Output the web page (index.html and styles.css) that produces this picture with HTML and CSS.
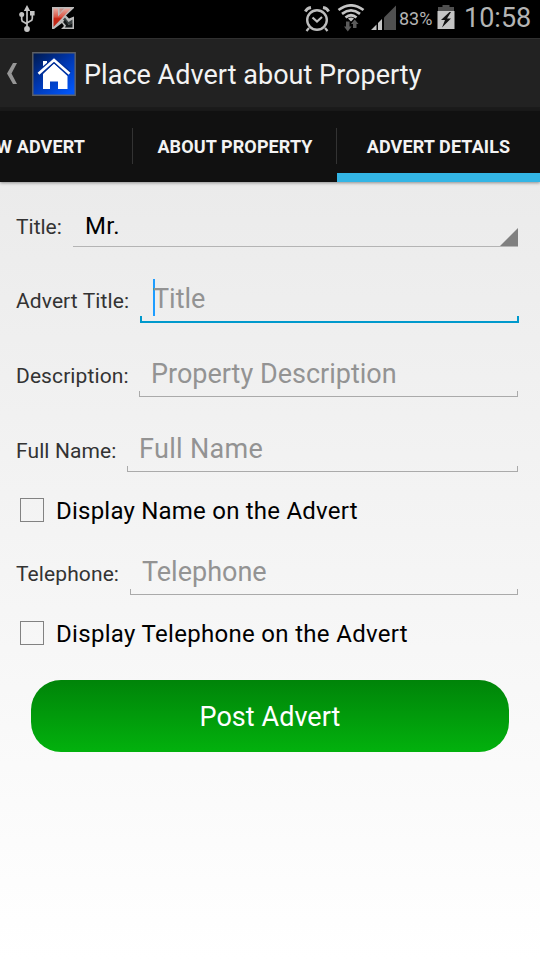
FILE: index.html
```
<!DOCTYPE html>
<html lang="en">
<head>
<meta charset="utf-8">
<title>Place Advert about Property</title>
<link rel="stylesheet" href="styles.css">
</head>
<body>
<header class="status">
  <svg class="usb" width="18" height="28" viewBox="0 0 18 28"><g fill="none" stroke="#c4c4c4" stroke-width="1.7"><path d="M9 4V25M3.7 10v4.5q0 2 2 2.5l3.3 2M14.3 9v4.500q0 2-2 2.500l-3.300 2"/></g><g fill="#c4c4c4"><path d="M9 0l3.200 6H5.800zM12 6h4.600v4.600H12z"/><circle cx="3.700" cy="9.500" r="2.500"/><circle cx="9" cy="24" r="2.900"/></g></svg>
  <svg class="kav" width="24" height="24" viewBox="0 0 24 24"><defs><linearGradient id="red" x2="0" y2="1"><stop offset="0" stop-color="#e8aaa0"/><stop offset=".45" stop-color="#d95545"/><stop offset=".55" stop-color="#c72412"/><stop offset="1" stop-color="#bd2b1c"/></linearGradient></defs><path d="M1 1h22v1L15 9.500l3 3 5-2V23H10l3-3-2-3-8 6H1z" fill="#bcbcbc"/><path d="M2.500 2.500H7v8l7-8h6L2.500 21z" fill="url(#red)"/><path d="M8.500 2.500H13L8.500 8z" fill="#c98d84"/><path d="M12 13.500l2-2 3.500 4.500 4-2.500V17l-3 2-5-4z" fill="#3a4243"/><path d="M12 16l2-2 4 5 3.500-2v4.500H14l1-2z" fill="#15191a"/></svg>
  <span class="gap"></span>
  <svg class="alarm" width="26" height="28" viewBox="0 0 26 28"><g fill="none" stroke="#bdbdbd"><circle cx="13" cy="15" r="9.800" stroke-width="2.400"/><path d="M8.500 12.500l4.500 4 5-4.500M5 23l-2.500 3M21 23l2.500 3" stroke-width="2.200"/><path d="M1.300 6.500Q3 3.200 7 2.500M24.700 6.500Q23 3.200 19 2.500" stroke-width="2.800"/></g></svg>
  <svg class="wifi" width="28" height="28" viewBox="0 0 28 28"><g fill="none" stroke="#c4c4c4" stroke-width="2.700"><path d="M1.500 6Q14-3.300 26.500 6M5 9.800Q14 3 23 9.800M8.500 13.500Q14 9 19.500 13.500"/></g><path d="M11 14.500q3-2 6 0l-3 3z" fill="#c4c4c4"/><path d="M9 17.500h3.500v5h2l-3.700 5-3.800-5h2zM16 24v-4h-2l3.700-4.500 3.800 4.500h-2v4z" fill="#5b5b5b"/></svg>
  <svg class="signal" width="26" height="26" viewBox="0 0 26 26"><path d="M13 12.500L25 .5V25H13z" fill="#505050"/><path d="M0 25l5.500-5.500V25zM7 18l4-4v11H7z" fill="#c4c4c4"/></svg>
  <span class="pct">83%</span>
  <svg class="batt" width="18" height="26" viewBox="0 0 18 26"><path d="M5.500 0h7v2H17v4H1V2h4.500z" fill="#505050"/><path d="M.5 6h17v18H.5z" fill="#c4c4c4"/><path d="M12.500 7L4 15h4l-3 7.500 9-9h-4l4-6.500z" fill="#111"/></svg>
  <span class="clock">10:58</span>
</header>
<div class="actionbar">
  <svg class="back" width="12" height="24" viewBox="0 0 12 24"><path d="M7 1h4L5.500 11.500 11 22H7L1 11.500z" fill="#969696"/></svg>
  <svg class="logo" width="44" height="44" viewBox="0 0 44 44"><defs><linearGradient id="blue" x2=".8" y2="1"><stop offset="0" stop-color="#00194b"/><stop offset=".5" stop-color="#0036ad"/><stop offset="1" stop-color="#0055f8"/></linearGradient></defs><path d="M.8.8h42.400v42.400H.8z" fill="url(#blue)" stroke="#5d6066" stroke-width="1.400"/><path d="M11 9h4v4l-4 3.500zM22 11.500L35.500 24v13H26v-7.500h-8V37H11V22z" fill="#fff"/><path d="M6.500 21.500L22 8l15.500 13.500" fill="none" stroke="#002f99" stroke-width="5"/><path d="M6.500 21.700L22 8l15.500 13.700" fill="none" stroke="#fff" stroke-width="2.600"/></svg>
  <h1 class="heading">Place Advert about Property</h1>
</div>
<nav class="tabs">
  <div class="tab first"><span>W ADVERT</span></div>
  <div class="tab second"><span>ABOUT PROPERTY</span></div>
  <div class="tab active"><span>ADVERT DETAILS</span></div>
</nav>
<main class="form">
  <div class="row select-row"><span class="label l-salutation">Title:</span><div class="select"><span class="value">Mr.</span><svg class="corner" width="18" height="18" viewBox="0 0 18 18"><path d="M18 0v18H0z" fill="#808080"/></svg></div></div>
  <div class="row"><span class="label l-title">Advert Title:</span><div class="field focus"><span class="caret"></span><span class="hint h-title">Title</span></div></div>
  <div class="row"><span class="label l-desc">Description:</span><div class="field"><span class="hint h-desc">Property Description</span></div></div>
  <div class="row"><span class="label l-name">Full Name:</span><div class="field"><span class="hint h-name">Full Name</span></div></div>
  <div class="check"><span class="box"></span><span class="c-name">Display Name on the Advert</span></div>
  <div class="row phone"><span class="label l-phone">Telephone:</span><div class="field"><span class="hint h-phone">Telephone</span></div></div>
  <div class="check"><span class="box"></span><span class="c-phone">Display Telephone on the Advert</span></div>
  <div class="post"><span>Post Advert</span></div>
</main>
</body>
</html>
```
FILE: styles.css
```
* { box-sizing: border-box; }
body { margin: 0; width: 540px; height: 960px; overflow: hidden; font-family: Roboto, "Noto Sans", sans-serif; background: #fff; display: flex; flex-direction: column; }
svg { display: block; flex: none; }
span { white-space: nowrap; }
.status { height: 38px; background: #000; display: flex; align-items: flex-start; padding: 5px 9px 0 18px; color: #b4b4b4; }
.kav { margin: 1px 0 0 15px; }
.gap { flex: 1; }
.alarm { margin-right: 7px; }
.wifi { margin: -1px 6px 0 0; }
.signal { margin-right: 2px; }
.pct { width: 33px; font-size: 18px; line-height: 28px; margin-right: 5px; }
.batt { margin-right: 9px; }
.clock { width: 67px; font-size: 27px; line-height: 26px; }
.actionbar { height: 73px; background: #222; border-top: 1px solid #303030; border-bottom: 4px solid #1b1b1b; display: flex; align-items: center; padding: 0 0 0 6px; }
.back { margin-top: 2px; }
.logo { margin: 2px 8px 0 14px; }
.heading { margin: 4px 0 0; color: #f3f3f3; font-size: 27px; font-weight: 400; line-height: 36px; letter-spacing: .03px; white-space: nowrap; }
.tabs { height: 71px; background: #111; display: flex; flex: none; color: #f3f3f3; font-size: 18px; font-weight: 700; line-height: 72px; letter-spacing: .1px; position: relative; z-index: 1; box-shadow: 0 1px 3px rgba(0,0,0,.4); }
.tab { height: 71px; display: flex; justify-content: center; }
.first { width: 133px; justify-content: flex-end; padding-right: 48px; }
.second { width: 204px; }
.active { width: 203px; box-shadow: inset 0 -9px #33b5e5; }
.first, .second { background: linear-gradient(#333, #333) right 17px / 1px 36px no-repeat; }
.form { flex: 1; background: linear-gradient(#ebebeb, #fff); }
.row { height: 75px; padding: 0 22px 1px 16px; display: flex; align-items: flex-end; color: #333; }
.select-row { height: 66px; }
.label { flex: none; font-size: 21px; line-height: 28px; margin-bottom: 7px; letter-spacing: .1px; }
.select-row .label { margin-bottom: 6px; letter-spacing: 0; }
.l-salutation { width: 57px; }
.l-title { width: 124px; margin-bottom: 8px; }
.l-desc { width: 123px; }
.l-name { width: 111px; }
.l-phone { width: 114px; }
.select { flex: 1; height: 40px; border-bottom: 1px solid #b4b4b4; display: flex; justify-content: space-between; color: #000; font-size: 24px; line-height: 38px; padding-left: 12px; letter-spacing: .3px; }
.corner { align-self: flex-end; }
.field { flex: 1; height: 48px; display: flex; padding-left: 12px; color: #939393; font-size: 27px; line-height: 50px; background: linear-gradient(#aaa,#aaa) left bottom / 1px 6px no-repeat, linear-gradient(#aaa,#aaa) right bottom / 1px 6px no-repeat, linear-gradient(#aaa,#aaa) bottom / 100% 1px no-repeat; }
.focus { line-height: 48px; margin-right: -1px; background: linear-gradient(#0099cc,#0099cc) left bottom / 2px 7px no-repeat, linear-gradient(#0099cc,#0099cc) right bottom / 2px 7px no-repeat, linear-gradient(#0099cc,#0099cc) bottom / 100% 2px no-repeat; }
.row:has(.focus) { padding-bottom: 0; }
.h-name { letter-spacing: .33px; }
.h-title { margin-left: -1px; }
.caret { width: 2px; height: 37px; margin: 4px -1px 0 1px; background: #1e9dff; }
.check { height: 48px; margin-top: 13px; padding-left: 20px; display: flex; align-items: center; font-size: 24px; line-height: 30px; color: #000; }
.c-name, .c-phone { padding-top: 2px; }
.c-name { letter-spacing: .22px; }
.c-phone { letter-spacing: .31px; }
.box { width: 24px; height: 24px; border: 1px solid #828282; margin-right: 12px; }
.phone { height: 62px; }
.post { margin: 23px 31px 0; height: 72px; border-radius: 30px; background: linear-gradient(#008409, #02b10d); color: #fff; font-size: 27px; line-height: 75px; text-align: center; letter-spacing: .05px; }
```
